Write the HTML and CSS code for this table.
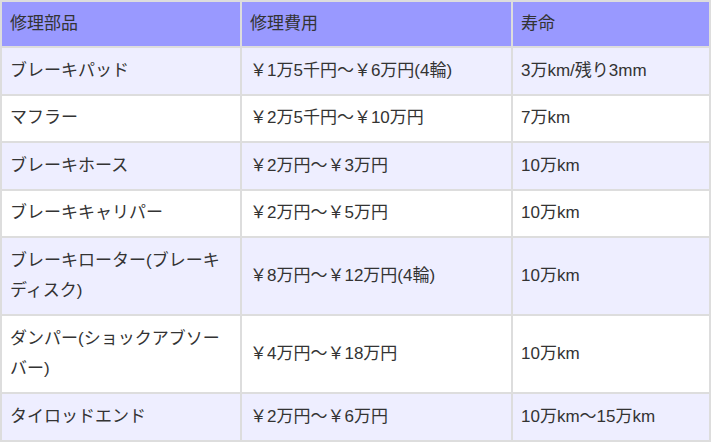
FILE: index.html
```html
<!DOCTYPE html>
<html lang="ja">
<head>
<meta charset="utf-8">
<title>修理部品</title>
<link rel="stylesheet" href="styles.css">
</head>
<body>
<table class="parts">
  <thead>
    <tr>
      <th class="c1">修理部品</th>
      <th class="c2">修理費用</th>
      <th class="c3">寿命</th>
    </tr>
  </thead>
  <tbody>
    <tr class="odd"><td>ブレーキパッド</td><td>￥1万5千円〜￥6万円(4輪)</td><td>3万km/残り3mm</td></tr>
    <tr><td>マフラー</td><td>￥2万5千円〜￥10万円</td><td>7万km</td></tr>
    <tr class="odd"><td>ブレーキホース</td><td>￥2万円〜￥3万円</td><td>10万km</td></tr>
    <tr><td>ブレーキキャリパー</td><td>￥2万円〜￥5万円</td><td>10万km</td></tr>
    <tr class="odd"><td>ブレーキローター(ブレーキディスク)</td><td>￥8万円〜￥12万円(4輪)</td><td>10万km</td></tr>
    <tr><td>ダンパー(ショックアブソーバー)</td><td>￥4万円〜￥18万円</td><td>10万km</td></tr>
    <tr class="odd"><td>タイロッドエンド</td><td>￥2万円〜￥6万円</td><td>10万km〜15万km</td></tr>
  </tbody>
</table>
</body>
</html>
```

FILE: styles.css
```css
html, body {
  margin: 0;
  padding: 0;
  background: #ffffff;
}

.parts {
  width: 711px;
  table-layout: fixed;
  border-collapse: separate;
  border-spacing: 2px;
  background: #dddddd;
  font-family: "Liberation Sans", "Noto Sans CJK JP", sans-serif;
  font-size: 17px;
  color: #333333;
}

.parts th,
.parts td {
  box-sizing: border-box;
  text-align: left;
  font-weight: normal;
  vertical-align: middle;
  padding: 7.5px 8px;
  line-height: 30.5px;
}

.parts th {
  background: #9999ff;
  padding: 7px 8px;
  line-height: 30px;
}

.parts .c1 { width: 238px; }
.parts .c2 { width: 269px; }
.parts .c3 { width: 196px; }

.parts td {
  background: #ffffff;
}

.parts tr.odd td {
  background: #eeeeff;
}
```
